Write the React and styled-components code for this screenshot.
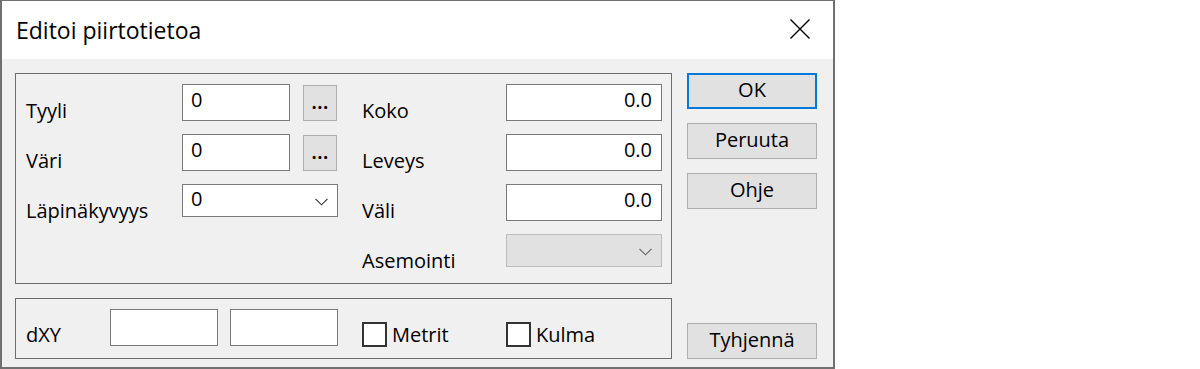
import React from "react";
import styled, { createGlobalStyle } from "styled-components";

const GlobalStyle = createGlobalStyle`
  body {
    margin: 0;
    background: #ffffff;
    font-family: "Open Sans", "Noto Sans", sans-serif;
    color: #000000;
  }
`;

const ChevronIcon = ({ color = "#333333" }) => (
  <svg width="13" height="8" viewBox="0 0 13 8">
    <polyline
      points="0.5,0.8 6.5,6.8 12.5,0.8"
      fill="none"
      stroke={color}
      strokeWidth="1.1"
    />
  </svg>
);

const CloseIcon = () => (
  <svg width="20" height="20" viewBox="0 0 20 20">
    <path d="M0.5 0.5 L19.5 19.5 M19.5 0.5 L0.5 19.5" stroke="#000" strokeWidth="1.4" />
  </svg>
);

const App = () => {
  return (
    <>
      <GlobalStyle />
      <Dialog>
        <TitleBar>
          <Title>Editoi piirtotietoa</Title>
          <CloseButton aria-label="Sulje">
            <CloseIcon />
          </CloseButton>
        </TitleBar>
        <Body>
          <LeftColumn>
            <GroupBox>
              <FormGrid>
                <Label>Tyyli</Label>
                <Field>
                  <Edit defaultValue="0" />
                  <DotsButton>...</DotsButton>
                </Field>
                <span />
                <Label>Koko</Label>
                <Edit $align="right" $width={156} defaultValue="0.0" />

                <Label>Väri</Label>
                <Field>
                  <Edit defaultValue="0" />
                  <DotsButton>...</DotsButton>
                </Field>
                <span />
                <Label>Leveys</Label>
                <Edit $align="right" $width={156} defaultValue="0.0" />

                <Label>Läpinäkyvyys</Label>
                <Combo>
                  <span>0</span>
                  <ChevronIcon />
                </Combo>
                <span />
                <Label>Väli</Label>
                <Edit $align="right" $width={156} defaultValue="0.0" />

                <span />
                <span />
                <span />
                <Label>Asemointi</Label>
                <Combo $disabled>
                  <span />
                  <ChevronIcon color="#606060" />
                </Combo>
              </FormGrid>
            </GroupBox>
            <GroupBox $small>
              <OffsetRow>
                <Label $short>dXY</Label>
                <Edit />
                <Edit />
                <CheckItem>
                  <CheckBox />
                  Metrit
                </CheckItem>
                <CheckItem>
                  <CheckBox />
                  Kulma
                </CheckItem>
              </OffsetRow>
            </GroupBox>
          </LeftColumn>
          <ButtonColumn>
            <Button $primary>OK</Button>
            <Button>Peruuta</Button>
            <Button>Ohje</Button>
            <Button $bottom>Tyhjennä</Button>
          </ButtonColumn>
        </Body>
      </Dialog>
    </>
  );
};

const Dialog = styled.div`
  width: 835px;
  height: 369px;
  box-sizing: border-box;
  border: 2px solid #707070;
  border-top-width: 1px;
  background: #f0f0f0;
  display: flex;
  flex-direction: column;
`;

const TitleBar = styled.div`
  height: 57px;
  flex-shrink: 0;
  background: #ffffff;
  display: flex;
  align-items: center;
  justify-content: space-between;
  padding: 0 23px 1px 14px;
`;

const Title = styled.h1`
  margin: 0;
  font-size: 23px;
  font-weight: 400;
  line-height: 28px;
`;

const CloseButton = styled.button`
  border: 0;
  background: transparent;
  padding: 0;
  width: 20px;
  height: 20px;
  display: flex;
  margin-top: -1px;
`;

const Body = styled.div`
  flex: 1;
  display: flex;
  gap: 15px;
  padding: 14px 16px 9px 13px;
`;

const LeftColumn = styled.div`
  width: 657px;
  display: flex;
  flex-direction: column;
  gap: 14px;
`;

const GroupBox = styled.div`
  box-sizing: border-box;
  height: ${(p) => (p.$small ? 61 : 211)}px;
  border: 1px solid #6d6d6d;
  padding: 10px 9px 0 10px;
`;

const FormGrid = styled.div`
  display: grid;
  grid-template-columns: 156px 156px 24px 144px 156px;
  grid-auto-rows: 37px;
  row-gap: 13px;
  align-items: start;
`;

const Label = styled.label`
  font-size: 20px;
  line-height: 24px;
  padding-top: ${(p) => (p.$short ? 14 : 15)}px;
  white-space: nowrap;
  width: ${(p) => (p.$short ? "84px" : "auto")};
  flex-shrink: 0;
`;

const Field = styled.div`
  display: flex;
  gap: 13px;
  align-items: flex-start;
`;

const Edit = styled.input`
  box-sizing: border-box;
  width: ${(p) => p.$width || 108}px;
  height: 37px;
  margin: 0;
  border: 1px solid #7a7a7a;
  border-radius: 0;
  background: #ffffff;
  padding: 3px ${(p) => (p.$align === "right" ? 9 : 8)}px 9px;
  font-family: inherit;
  font-size: 20px;
  line-height: 24px;
  color: #000;
  text-align: ${(p) => p.$align || "left"};
  outline: none;
`;

const DotsButton = styled.button`
  box-sizing: border-box;
  width: 34px;
  height: 36px;
  margin-top: 1px;
  padding: 0 0 4px;
  border: 1px solid #adadad;
  background: #e1e1e1;
  font-family: inherit;
  font-size: 21px;
  font-weight: 600;
  line-height: 20px;
  letter-spacing: 0;
  color: #000;
`;

const Combo = styled.div`
  box-sizing: border-box;
  width: 156px;
  height: 33px;
  border: 1px solid ${(p) => (p.$disabled ? "#bcbcbc" : "#7a7a7a")};
  background: ${(p) => (p.$disabled ? "#e1e1e1" : "#ffffff")};
  display: flex;
  align-items: flex-start;
  justify-content: space-between;
  padding: 2px 9px 0 8px;
  font-size: 20px;
  line-height: 24px;

  svg {
    margin-top: 11px;
  }
`;

const OffsetRow = styled.div`
  display: flex;
  align-items: flex-start;

  input + input {
    margin-left: 12px;
  }
  input + label {
    margin-left: 24px;
  }
`;

const CheckItem = styled.label`
  width: 144px;
  display: flex;
  align-items: center;
  gap: 5px;
  margin-top: 13px;
  font-size: 20px;
  line-height: 24px;
`;

const CheckBox = styled.span`
  box-sizing: border-box;
  width: 25px;
  height: 25px;
  border: 2px solid #333333;
  background: #ffffff;
`;

const ButtonColumn = styled.div`
  width: 130px;
  display: flex;
  flex-direction: column;
  gap: 14px;
`;

const Button = styled.button`
  box-sizing: border-box;
  width: 130px;
  height: 36px;
  margin-top: ${(p) => (p.$bottom ? "auto" : "0")};
  border: ${(p) => (p.$primary ? "2px solid #0078d7" : "1px solid #adadad")};
  background: #e1e1e1;
  font-family: inherit;
  font-size: 20px;
  line-height: 24px;
  color: #000;
  padding: 0 0 2px;
`;

export default App;
